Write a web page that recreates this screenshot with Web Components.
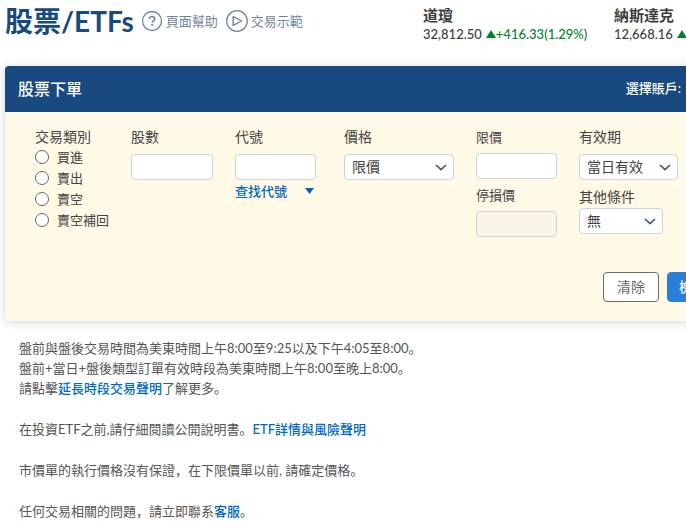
<!DOCTYPE html>
<html lang="zh-Hans">
<head>
<meta charset="utf-8">
<title>股票/ETFs</title>
<style>
    body {
        margin: 0;
        overflow: hidden;
        background: #fff;
        color: #444;
        font: 13px/20px Lato, "Noto Sans CJK SC", sans-serif;
    }

    .notes {
        padding: 17px 14px 0;
        color: #555;
    }

    .notes p {
        margin: 0 0 21px;
    }

    .notes a {
        color: #0068c6;
        font-weight: 500;
        text-decoration: none;
    }
</style>
</head>
<body>
<trade-page>
    <page-header slot="header">
        <span slot="title">股票/ETFs</span>
        <help-link slot="links" icon="help">頁面幫助</help-link>
        <help-link slot="links" icon="play">交易示範</help-link>
        <market-index name="道瓊" value="32,812.50" change="+416.33(1.29%)"></market-index>
        <market-index name="納斯達克" value="12,668.16" change=""></market-index>
    </page-header>

    <order-card>
        <span slot="title">股票下單</span>
        <trade-type label="交易類別" options="買進,賣出,賣空,賣空補回"></trade-type>
        <trade-field label="股數" style="--width: 82px"></trade-field>
        <trade-field label="代號" style="--width: 81px"><symbol-lookup>查找代號</symbol-lookup></trade-field>
        <trade-field label="價格" options="限價" style="--width: 110px"></trade-field>
        <field-stack>
            <trade-field label="限價" style="--width: 81px; --label-size: 13px; --gap: 6px"></trade-field>
            <trade-field label="停損價" disabled style="--width: 81px; --label-size: 13px; --gap: 6px"></trade-field>
        </field-stack>
        <field-stack style="--stack-gap: 7px">
            <trade-field label="有效期" options="當日有效" style="--width: 99px"></trade-field>
            <trade-field label="其他條件" options="無" style="--width: 84px; --gap: 1px"></trade-field>
        </field-stack>
        <action-button slot="actions">清除</action-button>
        <action-button slot="actions" primary>檢查訂單</action-button>
    </order-card>

    <div class="notes" slot="notes">
        <p>盤前與盤後交易時間為美東時間上午8:00至9:25以及下午4:05至8:00。<br>
        盤前+當日+盤後類型訂單有效時段為美東時間上午8:00至晚上8:00。<br>
        請點擊<a href="#hours">延長時段交易聲明</a>了解更多。</p>
        <p>在投資ETF之前,請仔細閱讀公開說明書。<a href="#etf">ETF詳情與風險聲明</a></p>
        <p>市價單的執行價格沒有保證，在下限價單以前, 請確定價格。</p>
        <p>任何交易相關的問題，請立即聯系<a href="#service">客服</a>。</p>
    </div>
</trade-page>

<script>
// Page container
class TradePage extends HTMLElement {
    constructor() {
        super();
        this.attachShadow({ mode: 'open' });
        this.shadowRoot.innerHTML = `
            <style>
                :host { display: block; min-width: 758px; padding: 0 5px; }
            </style>
            <slot name="header"></slot>
            <slot></slot>
            <slot name="notes"></slot>`;
    }
}
customElements.define('trade-page', TradePage);

// Title, help links and market indexes
class PageHeader extends HTMLElement {
    constructor() {
        super();
        this.attachShadow({ mode: 'open' });
        this.shadowRoot.innerHTML = `
            <style>
                :host { display: flex; align-items: flex-start; height: 66px; white-space: nowrap; }
                .heading { display: flex; align-items: center; flex: 0 0 418px; height: 42px; }
                h1 { margin: 0 7px 0 0; color: #18497f; font-size: 28px; line-height: 40px; font-weight: 700; }
                nav { display: flex; gap: 8px; }
                .indexes { display: grid; grid-template-columns: 191px auto; padding-top: 5px; }
            </style>
            <div class="heading">
                <h1><slot name="title"></slot></h1>
                <nav><slot name="links"></slot></nav>
            </div>
            <div class="indexes"><slot></slot></div>`;
    }
}
customElements.define('page-header', PageHeader);

const ICONS = {
    help: `<svg width="22" height="22" viewBox="0 0 22 22" fill="none" stroke="currentColor">
        <circle cx="11" cy="11" r="9.5" stroke-width="1.3"/>
        <path d="M8.3 9.1c0-1.6 1.1-2.6 2.7-2.6s2.7 1 2.7 2.4c0 1.8-2.6 2-2.6 3.8" stroke-width="1.5"/>
        <circle cx="11.1" cy="15" r="1" fill="currentColor" stroke="none"/></svg>`,
    play: `<svg width="22" height="22" viewBox="0 0 22 22" fill="none" stroke="currentColor">
        <circle cx="11" cy="11" r="10.3" stroke-width="1.2"/>
        <path d="M7.2 6.600v8.800l8.400-4.400z" stroke-width="1.4" stroke-linejoin="round"/></svg>`
};

class HelpLink extends HTMLElement {
    constructor() {
        super();
        this.attachShadow({ mode: 'open' });
        this.shadowRoot.innerHTML = `
            <style>
                :host { display: block; }
                a { display: flex; align-items: center; gap: 3px; color: #70849b; text-decoration: none; }
            </style>
            <a href="#${this.getAttribute('icon')}">${ICONS[this.getAttribute('icon')]}<slot></slot></a>`;
    }
}
customElements.define('help-link', HelpLink);

class MarketIndex extends HTMLElement {
    constructor() {
        super();
        this.attachShadow({ mode: 'open' });
        this.shadowRoot.innerHTML = `
            <style>
                :host { display: block; color: #3c3c3c; }
                strong { display: block; font-size: 15px; line-height: 20px; font-weight: 700; }
                div { display: flex; align-items: center; line-height: 18px; font-weight: 500; }
                svg { margin-left: 4px; }
                .change { color: #008428; }
            </style>
            <strong>${this.getAttribute('name')}</strong>
            <div>
                <span>${this.getAttribute('value')}</span>
                <svg width="10" height="8" viewBox="0 0 10 8"><path d="M5 0l5 8H0z" fill="#008428"/></svg>
                <span class="change">${this.getAttribute('change')}</span>
            </div>`;
    }
}
customElements.define('market-index', MarketIndex);

// Order form card
class OrderCard extends HTMLElement {
    constructor() {
        super();
        this.attachShadow({ mode: 'open' });
        this.shadowRoot.innerHTML = `
            <style>
                :host { display: block; border-radius: 4px; background: #fff9e6; box-shadow: 0 1px 8px rgba(30, 40, 80, .2); }
                header {
                    display: flex; align-items: center; justify-content: space-between;
                    height: 46px; padding: 0 16px 0 13px; border-radius: 4px 4px 0 0;
                    background: #18497f; color: #fff;
                }
                h2 { margin: 0; font-size: 16px; line-height: 20px; font-weight: 500; }
                .account { display: flex; align-items: center; gap: 8px; font-size: 13px; font-weight: 500; }
                .account label { padding-bottom: 3px; }
                .account select { width: 58px; height: 26px; border: 0; border-radius: 4px; background: #fff; }
                .fields {
                    display: grid; align-items: start;
                    grid-template-columns: 96px 104px 109px 132px 103px auto;
                    padding: 15px 16px 0 30px;
                }
                footer { display: flex; justify-content: flex-end; gap: 8px; padding: 35px 16px 19px; }
            </style>
            <header>
                <h2><slot name="title"></slot></h2>
                <div class="account"><label for="account">選擇賬戶:</label><select id="account"></select></div>
            </header>
            <div class="fields"><slot></slot></div>
            <footer><slot name="actions"></slot></footer>`;
    }
}
customElements.define('order-card', OrderCard);

class FieldStack extends HTMLElement {
    constructor() {
        super();
        this.attachShadow({ mode: 'open' });
        this.shadowRoot.innerHTML = `
            <style>:host { display: grid; gap: var(--stack-gap, 6px); }</style>
            <slot></slot>`;
    }
}
customElements.define('field-stack', FieldStack);

// Label with a text box, or with a drop-down when options are given
class TradeField extends HTMLElement {
    constructor() {
        super();
        this.attachShadow({ mode: 'open' });
        const options = this.getAttribute('options');
        const control = options
            ? `<div class="select"><select id="control">${options.split(',').map(o => `<option>${o}</option>`).join('')}</select>
               <svg width="12" height="7" viewBox="0 0 12 7" fill="none" stroke="#3c5878" stroke-width="1.6"><path d="M1 1l5 4.700L11 1"/></svg></div>`
            : `<input id="control" type="text" ${this.hasAttribute('disabled') ? 'disabled' : ''}>`;
        this.shadowRoot.innerHTML = `
            <style>
                :host { display: block; }
                label { display: block; margin-bottom: var(--gap, 7px); font-size: var(--label-size, 14px); line-height: 20px; }
                input, select {
                    display: block; box-sizing: border-box; width: 100%; height: 26px; margin: 0; padding: 0 7px;
                    border: 1px solid #ccd3df; border-radius: 4px; background: #fff;
                    color: #444; font: inherit; font-size: 14px;
                }
                input { width: var(--width); }
                input:disabled { background: #faf5e9; }
                select { appearance: none; }
                .select { display: grid; align-items: center; width: var(--width); }
                .select > * { grid-area: 1 / 1; }
                svg { justify-self: end; margin-right: 7px; pointer-events: none; }
            </style>
            <label for="control">${this.getAttribute('label')}</label>
            ${control}
            <slot></slot>`;
    }
}
customElements.define('trade-field', TradeField);

class SymbolLookup extends HTMLElement {
    constructor() {
        super();
        this.attachShadow({ mode: 'open' });
        this.shadowRoot.innerHTML = `
            <style>
                :host { display: block; margin-top: 1px; }
                a { display: flex; align-items: center; gap: 18px; color: #0068c6; font-weight: 500; text-decoration: none; }
            </style>
            <a href="#lookup"><slot></slot><svg width="9" height="6" viewBox="0 0 9 6"><path d="M0 0h9L4.500 6z" fill="#0060c8"/></svg></a>`;
    }
}
customElements.define('symbol-lookup', SymbolLookup);

class TradeType extends HTMLElement {
    constructor() {
        super();
        this.attachShadow({ mode: 'open' });
        const rows = this.getAttribute('options').split(',')
            .map(o => `<label><input type="radio" name="type">${o}</label>`).join('');
        this.shadowRoot.innerHTML = `
            <style>
                :host { display: block; white-space: nowrap; }
                fieldset { margin: 0; padding: 0; border: 0; min-width: 0; }
                legend { padding: 0; font-size: 14px; line-height: 20px; }
                label { display: flex; align-items: center; gap: 8px; margin-bottom: 1px; line-height: 20px; }
                input {
                    appearance: none; box-sizing: border-box; width: 14px; height: 14px; margin: 0;
                    border: 1px solid #666; border-radius: 50%; background: #fff;
                }
                input:checked { border: 4px solid #0068c6; }
            </style>
            <fieldset><legend>${this.getAttribute('label')}</legend>${rows}</fieldset>`;
    }
}
customElements.define('trade-type', TradeType);

class ActionButton extends HTMLElement {
    constructor() {
        super();
        this.attachShadow({ mode: 'open' });
        this.shadowRoot.innerHTML = `
            <style>
                :host { display: block; }
                button {
                    height: 30px; padding: 0 13px; border: 1px solid #6c6c6c; border-radius: 4px;
                    background: #fff; color: #666; font: inherit; font-size: 14px; white-space: nowrap;
                }
                :host([primary]) button { padding: 0 11px; border-color: #2b7fd8; background: #2b7fd8; color: #fff; font-weight: 500; }
            </style>
            <button type="button"><slot></slot></button>`;
    }
}
customElements.define('action-button', ActionButton);
</script>
</body>
</html>
